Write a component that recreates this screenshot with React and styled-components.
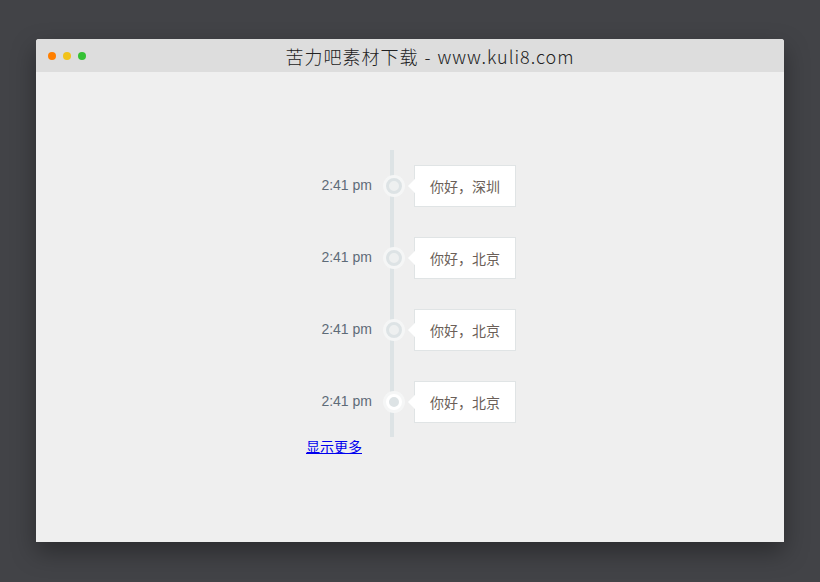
import React from "react";
import styled, { createGlobalStyle } from "styled-components";

const GlobalStyle = createGlobalStyle`
  html, body {
    margin: 0;
    padding: 0;
    background: #424347;
    font-family: "Liberation Sans", Arial, "Noto Sans CJK SC", sans-serif;
  }
`;

const Page = styled.div`
  width: 820px;
  height: 582px;
  padding: 39px 36px 0;
  box-sizing: border-box;
`;

const Window = styled.div`
  width: 748px;
  height: 503px;
  display: flex;
  flex-direction: column;
  border-radius: 3px 3px 0 0;
  overflow: hidden;
  background: #efefef;
  box-shadow: 0 10px 24px rgba(0, 0, 0, 0.35);
`;

const TitleBar = styled.div`
  height: 33px;
  flex: none;
  display: flex;
  align-items: center;
  background: #dddddd;
  padding-left: 12px;
`;

const Dots = styled.div`
  display: flex;
  gap: 7px;
`;

const Dot = styled.span`
  width: 8px;
  height: 8px;
  border-radius: 50%;
  background: ${(p) => p.color};
`;

const Title = styled.div`
  flex: 1;
  text-align: center;
  margin-right: 10px;
  font-family: "Noto Sans CJK SC", "DejaVu Sans", sans-serif;
  font-size: 18px;
  font-weight: 300;
  color: #222;
  letter-spacing: 1px;
  word-spacing: 1px;
`;

const Content = styled.div`
  flex: 1;
  padding: 78px 0 0 270px;
`;

const Wrap = styled.div`
  width: 230px;
`;

const Timeline = styled.ul`
  list-style: none;
  margin: 0;
  padding: 15px 0 14px;
  position: relative;

  &::before {
    content: "";
    position: absolute;
    top: 0;
    bottom: 0;
    left: 84px;
    width: 4px;
    background: #dde3e5;
  }
`;

const Item = styled.li`
  display: grid;
  grid-template-columns: 66px 20px auto;
  column-gap: 12px;
  align-items: center;
  margin-bottom: 30px;

  &:last-child {
    margin-bottom: 0;
  }
`;

const Time = styled.span`
  text-align: right;
  font-size: 14px;
  color: #5e6b78;
  margin-top: -3px;
`;

const Marker = styled.span`
  justify-self: start;
  position: relative;
  width: 10px;
  height: 10px;
  margin-left: 2px;
  border-radius: 50%;
  border: 3px solid ${(p) => (p.$active ? "#ffffff" : "#dde3e5")};
  background: ${(p) => (p.$active ? "#dde3e5" : "#eef0f0")};
  box-shadow: 0 0 0 3px #f5f6f6;
`;

const Card = styled.div`
  justify-self: start;
  position: relative;
  margin-left: -2px;
  background: #fff;
  border: 1px solid #e0e4e5;
  height: 40px;
  padding: 0 15px;
  display: flex;
  align-items: center;
  font-family: "Liberation Sans", "Noto Sans CJK SC", sans-serif;
  font-size: 14px;
  color: #6b5f58;
  white-space: nowrap;

  &::before,
  &::after {
    content: "";
    position: absolute;
    top: 50%;
    transform: translateY(-50%);
    border-style: solid;
    border-color: transparent;
  }
  &::before {
    left: -8px;
    border-width: 7px 8px 7px 0;
    border-right-color: #eef0f0;
  }
  &::after {
    left: -7px;
    border-width: 7px 7px 7px 0;
    border-right-color: #fff;
  }
`;

const MoreLink = styled.a`
  display: block;
  font-family: "Liberation Sans", "Noto Sans CJK SC", sans-serif;
  font-size: 14px;
  line-height: 20px;
  color: #0000ee;
  text-decoration: underline;
  width: max-content;
`;

const items = [
  { time: "2:41 pm", text: "你好，深圳" },
  { time: "2:41 pm", text: "你好，北京" },
  { time: "2:41 pm", text: "你好，北京" },
  { time: "2:41 pm", text: "你好，北京", active: true },
];

export default function App() {
  return (
    <Page>
      <GlobalStyle />
      <Window>
        <TitleBar>
          <Dots>
            <Dot color="#ff7f00" />
            <Dot color="#f2c31a" />
            <Dot color="#35c135" />
          </Dots>
          <Title>苦力吧素材下载 - www.kuli8.com</Title>
        </TitleBar>
        <Content>
          <Wrap>
            <Timeline>
              {items.map((it, i) => (
                <Item key={i}>
                  <Time>{it.time}</Time>
                  <Marker $active={it.active} />
                  <Card>{it.text}</Card>
                </Item>
              ))}
            </Timeline>
            <MoreLink href="#">显示更多</MoreLink>
          </Wrap>
        </Content>
      </Window>
    </Page>
  );
}
